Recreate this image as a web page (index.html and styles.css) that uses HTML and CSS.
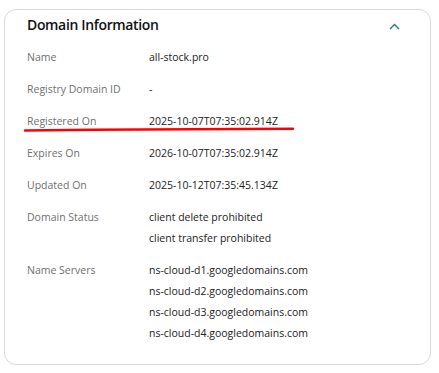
FILE: index.html
```html
<!DOCTYPE html>
<html lang="en">
<head>
    <meta charset="UTF-8">
    <meta name="viewport" content="width=device-width, initial-scale=1.0">
    <title>Domain Information</title>
    <link rel="stylesheet" href="styles.css">
</head>
<body>
    <section class="domain-card">
        <div class="domain-card__header">
            <h2 class="domain-card__title">Domain Information</h2>
            <button class="domain-card__toggle" aria-label="Collapse">
                <svg width="11" height="7" viewBox="0 0 11 7">
                    <path d="M1 6 L5.5 1.5 L10 6" fill="none" stroke="#1b7c80" stroke-width="1.4"/>
                </svg>
            </button>
        </div>

        <dl class="domain-card__list">
            <div class="domain-card__row">
                <dt>Name</dt>
                <dd>all-stock.pro</dd>
            </div>
            <div class="domain-card__row">
                <dt>Registry Domain ID</dt>
                <dd>-</dd>
            </div>
            <div class="domain-card__row">
                <dt>Registered On</dt>
                <dd>2025-10-07T07:35:02.914Z</dd>
            </div>
            <div class="domain-card__row">
                <dt>Expires On</dt>
                <dd>2026-10-07T07:35:02.914Z</dd>
            </div>
            <div class="domain-card__row">
                <dt>Updated On</dt>
                <dd>2025-10-12T07:35:45.134Z</dd>
            </div>
            <div class="domain-card__row">
                <dt>Domain Status</dt>
                <dd>
                    <span>client delete prohibited</span>
                    <span>client transfer prohibited</span>
                </dd>
            </div>
            <div class="domain-card__row">
                <dt>Name Servers</dt>
                <dd>
                    <span>ns-cloud-d1.googledomains.com</span>
                    <span>ns-cloud-d2.googledomains.com</span>
                    <span>ns-cloud-d3.googledomains.com</span>
                    <span>ns-cloud-d4.googledomains.com</span>
                </dd>
            </div>
        </dl>

        <!-- red marker under "Registered On" -->
        <svg class="domain-card__mark" width="300" height="8" viewBox="0 0 300 8">
            <path d="M20 4.5 L87 3.8 L288 2.8" fill="none" stroke="#f00" stroke-width="2.4" stroke-linecap="round"/>
        </svg>
    </section>
</body>
</html>
```

FILE: styles.css
```css
body {
    margin: 0;
    font-family: "Open Sans", "Liberation Sans", sans-serif;
    background: #fff;
}

.domain-card {
    position: relative;
    margin: 9px 8px 6px 4px;
    padding: 3px 22px 23px 22px;
    border: 1px solid #d6dbe0;
    border-radius: 12px;
    height: 356px;
    box-sizing: border-box;
}

/* header */
.domain-card__header {
    display: flex;
    align-items: center;
    justify-content: space-between;
    height: 24px;
}

.domain-card__title {
    margin: 0;
    font-size: 14px;
    font-weight: 600;
    letter-spacing: -0.35px;
    line-height: 24px;
    color: #111;
}

.domain-card__toggle {
    display: flex;
    padding: 0;
    margin: 2px 8px 0 0;
    border: none;
    background: none;
}

/* rows */
.domain-card__list {
    margin: 10px 0 0;
    font-size: 10.5px;
    line-height: 21px;
}

.domain-card__row {
    display: flex;
    margin-bottom: 11px;
}

.domain-card__row dt {
    flex: 0 0 122px;
    color: #6f6f6f;
}

.domain-card__row dd {
    margin: 0;
    display: flex;
    flex-direction: column;
    color: #222;
}

.domain-card__mark {
    position: absolute;
    left: 0;
    top: 116px;
}
```
